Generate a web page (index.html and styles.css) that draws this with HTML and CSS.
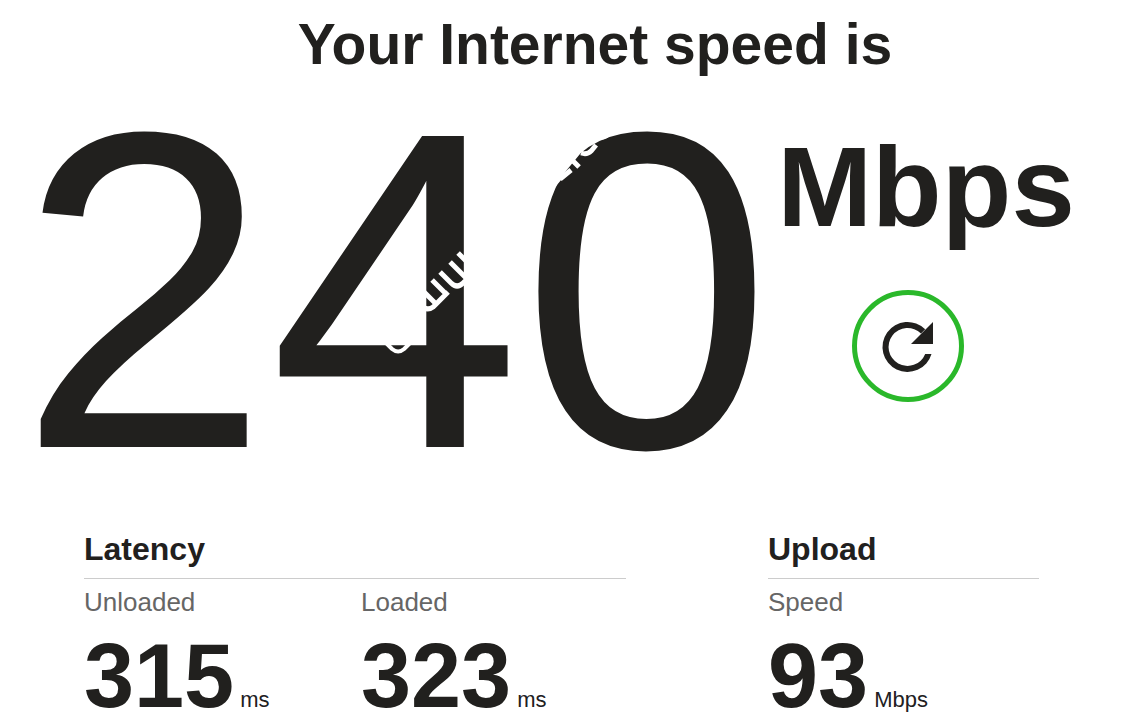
FILE: index.html
```html
<!DOCTYPE html>
<html lang="en">

<head>
    <meta charset="UTF-8">
    <meta name="viewport" content="width=device-width, initial-scale=1.0">
    <title>Internet speed</title>
    <link rel="stylesheet" href="styles.css">
</head>

<body>
    <main>
        <h1 class="title">Your Internet speed is</h1>

        <section class="result">
            <div class="speed">
                <span class="speed-value">240</span>
                <!-- white marks over the digits -->
                <svg class="marks" viewBox="18 91 754 400" fill="none" stroke="#fff" stroke-width="5" aria-hidden="true">
                    <path d="M386 343l6 6q6 5 12 0l6-6" stroke-width="4" />
                    <path d="M422 290l13 13M432 280l14 14M415 298l5 6q6 8 13 3l15-15" />
                    <path d="M440 272l11 11q6 6 12 0l5-5M450 262l16 16M458 253l10 10" />
                    <path d="M556 186l5-6 4-8 10-12 8-10 14-11q9 3 15-6l-6-9-46 16-15 40z" fill="#fff" stroke="none" />
                    <path d="M560 179l11-9M573 161l6 6M581 153q6 2 10-2l5-6" />
                </svg>
            </div>
            <div class="side">
                <span class="speed-units">Mbps</span>
                <button class="restart" type="button" aria-label="Restart test">
                    <svg viewBox="0 0 112 112" aria-hidden="true">
                        <path d="M79.500 64A25 25 0 1 1 73.200 39.300L69 43.500A19 19 0 1 0 73.200 64zM81 32v22H59z" fill="#21201e" />
                    </svg>
                </button>
            </div>
        </section>

        <section class="details">
            <div class="latency">
                <h2 class="heading">Latency</h2>
                <div class="columns">
                    <div>
                        <div class="label">Unloaded</div>
                        <div class="value">315<span class="units"> ms</span></div>
                    </div>
                    <div>
                        <div class="label">Loaded</div>
                        <div class="value">323<span class="units"> ms</span></div>
                    </div>
                </div>
            </div>
            <div class="upload">
                <h2 class="heading">Upload</h2>
                <div class="label">Speed</div>
                <div class="value">93<span class="units"> Mbps</span></div>
            </div>
        </section>
    </main>
</body>

</html>
```
FILE: styles.css
```css
body {
    margin: 0;
    background: #fff;
    color: #21201e;
    font-family: "Liberation Sans", Arial, sans-serif;
}

.title {
    margin: 0;
    padding: 12px 0 15px 48px;
    font-size: 57px;
    line-height: 64px;
    text-align: center;
}

.result {
    display: flex;
    gap: 5px;
    padding-left: 18px;
}

.speed {
    position: relative;
}

.speed-value {
    display: block;
    font-size: 452px;
    line-height: 400px;
}

.marks {
    position: absolute;
    top: 0;
    left: 0;
    width: 100%;
    height: 100%;
}

.side {
    display: flex;
    flex-direction: column;
    align-items: flex-start;
    padding-top: 36px;
}

.speed-units {
    font-size: 114px;
    font-weight: bold;
    line-height: 120px;
}

.restart {
    box-sizing: border-box;
    width: 112px;
    height: 112px;
    margin: 43px 0 0 75px;
    padding: 0;
    border: 5px solid #2ab82a;
    border-radius: 50%;
    background: none;
    cursor: pointer;
}

.restart svg {
    display: block;
    margin: -5px;
    width: 112px;
    height: 112px;
}

.details {
    display: grid;
    grid-template-columns: 2fr 1fr;
    gap: 142px;
    padding: 38px 103px 0 84px;
}

.heading {
    margin: 0 0 7px;
    padding-bottom: 9px;
    border-bottom: 1px solid #ccc;
    font-size: 32px;
    line-height: 40px;
}

.columns {
    display: grid;
    grid-template-columns: 1fr 1fr;
    gap: 12px;
}

.label {
    margin-bottom: 14px;
    color: #666;
    font-size: 26px;
    line-height: 32px;
}

.value {
    font-size: 90px;
    font-weight: bold;
    line-height: 88px;
    white-space: nowrap;
}

.units {
    font-size: 22px;
    font-weight: normal;
}
```
